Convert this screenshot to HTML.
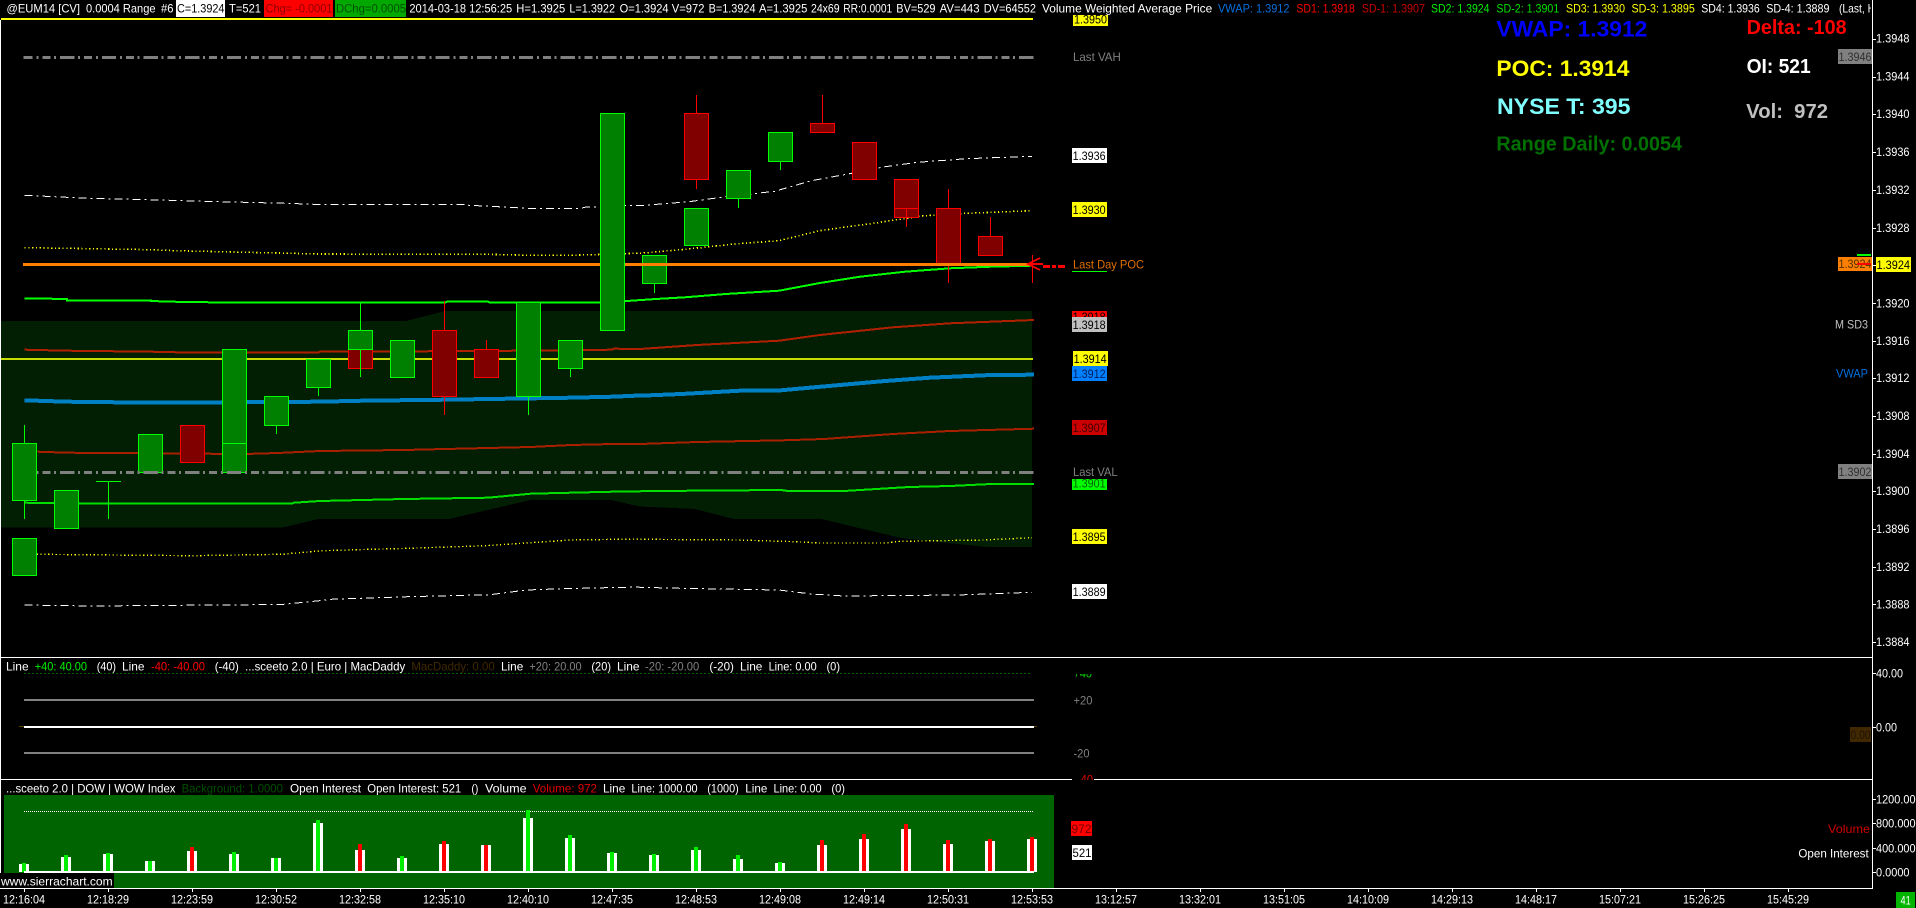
<!DOCTYPE html>
<html lang="en"><head><meta charset="utf-8"><title>Sierra Chart @EUM14</title>
<style>
html,body{margin:0;padding:0;background:#000;width:1916px;height:908px;overflow:hidden}
svg{display:block}
text{font-family:"Liberation Sans",Arial,sans-serif;font-size:12px;fill:#fff}
.b{font-weight:bold}
.k{fill:#000}
</style></head><body>
<svg xmlns="http://www.w3.org/2000/svg" width="1916" height="908" viewBox="0 0 1916 908">
<defs>
<clipPath id="cHead"><rect x="0" y="0" width="1871" height="18"/></clipPath>
<clipPath id="c40"><rect x="1070" y="674" width="30" height="8"/></clipPath>
<clipPath id="cm40"><rect x="1070" y="774" width="30" height="6"/></clipPath>
<clipPath id="c3901"><rect x="1072" y="479" width="35" height="11"/></clipPath>
<clipPath id="c3918"><rect x="1072" y="311" width="35" height="6"/></clipPath>
<clipPath id="c3950"><rect x="1073" y="15" width="35" height="11"/></clipPath>
</defs>
<rect width="1916" height="908" fill="#000"/>

<!-- shaded band -->
<polygon fill="#021f03" shape-rendering="crispEdges" points="0,321 406,321 445,311 1032,311 1032,547 987,547 901,538 821.6,519 734,519 695,509 640,506.5 611,500 530.6,500 449,519 318.4,519 281.6,527.7 0,527.7"/>

<!-- study lines -->
<g fill="none" shape-rendering="crispEdges">
<polyline stroke="#fff" stroke-width="1" stroke-dasharray="8 4 2 4" points="24.5,195.3 67,197.3 90,198.3 131,199.3 171,200.3 204,201.3 245,202.3 286,203.3 314,204.3 465,204.3 469,205.3 510,207.3 526,208.3 582,208.3 584,207.3 625,205.7 640,205.7 689,201.7 725.7,196.7 774.7,191.3 811.4,180.7 848,174 885,166.7 917.6,162.3 966.5,158.7 1032,156.3"/>
<polyline stroke="#fff" stroke-width="1" stroke-dasharray="8 4 2 4" points="24.5,605 90,606 281.6,604.5 326.5,600 330.6,599.3 408,596.7 490,594.7 526.5,590 563,588.7 636.7,587 640,587.3 680.8,588.3 778.8,590 811.4,594 844,596 958,595 1032,592.3"/>
<polyline stroke="#ffff00" stroke-width="1.6" stroke-dasharray="1.2 2.6" points="24.5,247.7 67,248.3 108,249 151,249.7 175.5,250.7 232.6,252 277.6,253 318,254 485.7,254.3 530.6,255.3 571,255.3 636.7,253.3 640,253.3 685,249.3 738,243.7 778.8,240.7 819.6,230.7 868.6,224 921.6,216 966.5,213.3 1032,210.7"/>
<polyline stroke="#ffff00" stroke-width="1.4" stroke-dasharray="1.2 2.6" points="36.7,554.3 192,555.7 281.6,554.3 322.4,550.7 408,548.3 485.7,545.7 530.6,542.7 571.4,540 636.7,539 640,539.3 738,540 795,541.7 819.6,543 885,543 901,541.3 983,540 1032,537.7"/>
<polyline stroke="#00ff00" stroke-width="2" points="24.5,298.3 67,299 67,300.3 151,300.3 151,301 172,301.7 237,302.7 445,302.7 447,301.7 488,301.7 490,302.7 600,302.7 612,302 656,299 685,297.3 725.7,294 779,290.7 820,283 860,276.7 905,271.7 950,268.3 991,266.7 1032,265.7"/>
<polyline stroke="#b02000" stroke-width="2" points="24.5,349.7 67,350.7 151,351.7 194,352.7 318,352.7 320,351.7 488,351 612,349.7 614,348.7 640,349 697,345 779,340.7 820,335 893,327.3 950,323.3 1034,320"/>
<rect x="1" y="358" width="1032" height="2" fill="#c8dc00"/>
<polyline stroke="#0080c4" stroke-width="4" points="24.5,400.3 67,401.7 151,402.7 320,401.7 363,400.7 446,399.7 571,397.7 613,396.7 635,395.7 640,395.7 681,394 740,390.7 781,390.3 832,385.7 885,381 930,377.7 991,375 1034,374.7"/>
<polyline stroke="#a82000" stroke-width="2" points="37.5,451.7 67,452.7 245,454 277.6,453 320,451 404,450 445,449 530.6,447 571,445 613,444 640,444 697,442 783,440.3 824,439 893,434 950,431 1034,428.7"/>
<polyline stroke="#00e000" stroke-width="2" points="24.5,502.7 81,503.7 292,503.7 294,502.7 320,501 404,499 488,497.7 530.6,493.7 571,492.7 613,491.7 656,491 781,490 788,491 844,491 909,487 950,486 991,484 1034,484"/>
</g>

<!-- candles -->
<g shape-rendering="crispEdges">
<g stroke="#00ff00" stroke-width="1" fill="none">
<path d="M24.5 425V519M108.5 481V519M96 481.5H121M276.5 425V434M318.5 387V396M360.5 303V377M528.5 396V415M570.5 368V377M654.5 283V293M738.5 198V208M780.5 161V170"/>
</g>
<g stroke="#ff0000" stroke-width="1" fill="none">
<path d="M444.5 301V415M486.5 340V349M696.5 95V189M822.5 95V123M906.5 217V227M948.5 189V283M990.5 217V236"/>
</g>
<g fill="#800000" stroke="#ff0000" stroke-width="1">
<rect x="348.5" y="349.5" width="24" height="19"/>
<rect x="180.5" y="425.5" width="24" height="37"/>
<rect x="432.5" y="330.5" width="24" height="66"/>
<rect x="474.5" y="349.5" width="24" height="28"/>
<rect x="684.5" y="113.5" width="24" height="66"/>
<rect x="810.5" y="123.5" width="24" height="9"/>
<rect x="852.5" y="142.5" width="24" height="37"/>
<rect x="894.5" y="179.5" width="24" height="38"/>
<rect x="936.5" y="208.5" width="24" height="56"/>
<rect x="978.5" y="236.5" width="24" height="19"/>
</g>
<path d="M894.5 208.5H918.5M906.5 208V217" stroke="#ff0000" stroke-width="1" fill="none"/>
<path d="M360.5 349V377" stroke="#00ff00" stroke-width="1" fill="none"/>
<g fill="#008000" stroke="#00ff00" stroke-width="1">
<rect x="12.5" y="443.5" width="24" height="57"/>
<rect x="12.5" y="538.5" width="24" height="37"/>
<rect x="54.5" y="490.5" width="24" height="38"/>
<rect x="138.5" y="434.5" width="24" height="38"/>
<rect x="222.5" y="349.5" width="24" height="94"/>
<rect x="222.5" y="443.5" width="24" height="29"/>
<rect x="264.5" y="396.5" width="24" height="29"/>
<rect x="306.5" y="359.5" width="24" height="28"/>
<rect x="348.5" y="330.5" width="24" height="19"/>
<rect x="390.5" y="340.5" width="24" height="37"/>
<rect x="516.5" y="302.5" width="24" height="94"/>
<rect x="558.5" y="340.5" width="24" height="28"/>
<rect x="642.5" y="255.5" width="24" height="28"/>
<rect x="684.5" y="208.5" width="24" height="37"/>
<rect x="726.5" y="170.5" width="24" height="28"/>
<rect x="768.5" y="132.5" width="24" height="29"/>
</g>
<!-- orange last day POC -->
<rect x="23" y="263" width="1007" height="3" fill="#ff8000"/>
<rect x="600.5" y="113.5" width="24" height="217" fill="#008000" stroke="#00ff00" stroke-width="1"/>
</g>

<!-- value area lines -->
<g fill="none" stroke="#808080" stroke-width="3" shape-rendering="crispEdges">
<line x1="23.5" y1="57.5" x2="1034.5" y2="57.5" stroke-dasharray="14.3 3.7 2 4 8 3.7 2 4" stroke-dashoffset="5.1"/>
<line x1="37" y1="472.5" x2="1034.5" y2="472.5" stroke-dasharray="14.3 3.7 2 4 8 3.7 2 4" stroke-dashoffset="18.6"/>
</g>

<!-- yellow top line -->
<rect x="1" y="18" width="1032" height="2" fill="#ffff00"/>

<!-- arrow -->
<g fill="none" stroke="#ff0000" shape-rendering="crispEdges">
<path d="M1032.5 255V283" stroke-width="1"/>
<path d="M1040 258L1028 264L1040 270M1028 264H1043" stroke-width="2"/>
<path d="M1043 266.5H1050M1052 266.5H1056M1058 266.5H1065" stroke-width="3"/>
</g>

<!-- panes & axis -->
<g fill="#fff" shape-rendering="crispEdges">
<rect x="0" y="20" width="1" height="868"/>
<rect x="1872" y="0" width="1" height="889"/>
<rect x="0" y="657" width="1872" height="1"/>
<rect x="0" y="779" width="1072" height="1"/>
<rect x="1094" y="779" width="778" height="1"/>
<rect x="0" y="888" width="1872" height="1"/>
<path d="M1873 39h3v1h-3zM1873 77h3v1h-3zM1873 114h3v1h-3zM1873 152h3v1h-3zM1873 190h3v1h-3zM1873 228h3v1h-3zM1873 265h3v1h-3zM1873 303h3v1h-3zM1873 341h3v1h-3zM1873 378h3v1h-3zM1873 416h3v1h-3zM1873 454h3v1h-3zM1873 491h3v1h-3zM1873 529h3v1h-3zM1873 567h3v1h-3zM1873 604h3v1h-3zM1873 642h3v1h-3zM1873 673h3v1h-3zM1873 727h3v1h-3zM1873 799h3v1h-3zM1873 823h3v1h-3zM1873 848h3v1h-3zM1873 872h3v1h-3z"/>
<path d="M24 889h1v3h-1zM108 889h1v3h-1zM192 889h1v3h-1zM276 889h1v3h-1zM360 889h1v3h-1zM444 889h1v3h-1zM528 889h1v3h-1zM612 889h1v3h-1zM696 889h1v3h-1zM780 889h1v3h-1zM864 889h1v3h-1zM948 889h1v3h-1zM1032 889h1v3h-1zM1116 889h1v3h-1zM1200 889h1v3h-1zM1284 889h1v3h-1zM1368 889h1v3h-1zM1452 889h1v3h-1zM1536 889h1v3h-1zM1620 889h1v3h-1zM1704 889h1v3h-1zM1788 889h1v3h-1z"/>
</g>

<!-- middle pane lines -->
<g shape-rendering="crispEdges">
<line x1="24.5" y1="673.5" x2="1032" y2="673.5" stroke="#00c000" stroke-width="1" stroke-dasharray="1 3"/>
<rect x="24" y="699" width="1010" height="2" fill="#808080"/>
<rect x="24" y="726" width="1010" height="2" fill="#fff"/>
<rect x="19" y="726" width="5" height="1" fill="#604000"/>
<rect x="1034" y="726" width="3" height="1" fill="#604000"/>
<rect x="24" y="752" width="1010" height="2" fill="#808080"/>
</g>

<!-- volume pane -->
<g shape-rendering="crispEdges">
<rect x="4" y="795" width="1050" height="93" fill="#006400"/>
<line x1="24" y1="811.5" x2="1033" y2="811.5" stroke="#fff" stroke-width="1" stroke-dasharray="1 1"/>
<g fill="#fff">
<rect x="19" y="864" width="10" height="8"/><rect x="61" y="857" width="10" height="15"/><rect x="103" y="854" width="10" height="18"/><rect x="145" y="861" width="10" height="11"/><rect x="187" y="851" width="10" height="21"/><rect x="229" y="854" width="10" height="18"/><rect x="271" y="858" width="10" height="14"/><rect x="313" y="823" width="10" height="49"/><rect x="355" y="850" width="10" height="22"/><rect x="397" y="858" width="10" height="14"/><rect x="439" y="844" width="10" height="28"/><rect x="481" y="845" width="10" height="27"/><rect x="523" y="818" width="10" height="54"/><rect x="565" y="838" width="10" height="34"/><rect x="607" y="853" width="10" height="19"/><rect x="649" y="855" width="10" height="17"/><rect x="691" y="850" width="10" height="22"/><rect x="733" y="859" width="10" height="13"/><rect x="775" y="863" width="10" height="9"/><rect x="817" y="845" width="10" height="27"/><rect x="859" y="839" width="10" height="33"/><rect x="901" y="829" width="10" height="43"/><rect x="943" y="844" width="10" height="28"/><rect x="985" y="841" width="10" height="31"/><rect x="1027" y="839" width="10" height="33"/>
</g>
<g fill="#00ee00">
<rect x="22" y="863" width="4" height="9"/><rect x="64" y="855" width="4" height="17"/><rect x="106" y="853" width="4" height="19"/><rect x="148" y="861" width="4" height="11"/><rect x="232" y="852" width="4" height="20"/><rect x="274" y="858" width="4" height="14"/><rect x="316" y="820" width="4" height="52"/><rect x="400" y="856" width="4" height="16"/><rect x="526" y="810" width="4" height="62"/><rect x="568" y="835" width="4" height="37"/><rect x="610" y="852" width="4" height="20"/><rect x="652" y="854" width="4" height="18"/><rect x="694" y="847" width="4" height="25"/><rect x="736" y="855" width="4" height="17"/><rect x="778" y="862" width="4" height="10"/>
</g>
<g fill="#ff0000">
<rect x="190" y="847" width="4" height="25"/><rect x="358" y="844" width="4" height="28"/><rect x="442" y="841" width="4" height="31"/><rect x="484" y="845" width="4" height="27"/><rect x="820" y="840" width="4" height="32"/><rect x="862" y="834" width="4" height="38"/><rect x="904" y="824" width="4" height="48"/><rect x="946" y="840" width="4" height="32"/><rect x="988" y="839" width="4" height="33"/><rect x="1030" y="837" width="4" height="35"/>
</g>
<rect x="24" y="871" width="1010" height="2" fill="#fff"/>
<rect x="0" y="873" width="114" height="15" fill="#000"/>
</g>
<text x="1" y="885.6" textLength="111.6" lengthAdjust="spacingAndGlyphs">www.sierrachart.com</text>

<!-- header row -->
<g shape-rendering="crispEdges">
<rect x="176" y="0" width="49" height="17" fill="#fff"/>
<rect x="264" y="0" width="69" height="17" fill="#ff0000"/>
<rect x="335" y="0" width="71" height="17" fill="#00a800"/>
</g>
<g clip-path="url(#cHead)">
<text x="6.5" y="12.5" textLength="73.5" lengthAdjust="spacingAndGlyphs">@EUM14 [CV]</text>
<text x="86" y="12.5" textLength="69.5" lengthAdjust="spacingAndGlyphs">0.0004 Range</text>
<text x="161" y="12.5" textLength="12.5" lengthAdjust="spacingAndGlyphs">#6</text>
<text x="177" y="12.5" textLength="47.5" lengthAdjust="spacingAndGlyphs" class="k">C=1.3924</text>
<text x="229" y="12.5" textLength="32" lengthAdjust="spacingAndGlyphs">T=521</text>
<text x="265.5" y="12.5" textLength="67" lengthAdjust="spacingAndGlyphs" style="fill:#8c0000">Chg= -0.0001</text>
<text x="336" y="12.5" textLength="70" lengthAdjust="spacingAndGlyphs" style="fill:#005000">DChg=0.0005</text>
<text x="409.4" y="12.5" textLength="102.8" lengthAdjust="spacingAndGlyphs">2014-03-18 12:56:25</text>
<text x="516.3" y="12.5" textLength="49" lengthAdjust="spacingAndGlyphs">H=1.3925</text>
<text x="569.4" y="12.5" textLength="45.6" lengthAdjust="spacingAndGlyphs">L=1.3922</text>
<text x="619.6" y="12.5" textLength="49" lengthAdjust="spacingAndGlyphs">O=1.3924</text>
<text x="671.8" y="12.5" textLength="32.7" lengthAdjust="spacingAndGlyphs">V=972</text>
<text x="708.6" y="12.5" textLength="46.9" lengthAdjust="spacingAndGlyphs">B=1.3924</text>
<text x="759" y="12.5" textLength="48.3" lengthAdjust="spacingAndGlyphs">A=1.3925</text>
<text x="811" y="12.5" textLength="28.6" lengthAdjust="spacingAndGlyphs">24x69</text>
<text x="843.3" y="12.5" textLength="48.9" lengthAdjust="spacingAndGlyphs">RR:0.0001</text>
<text x="896.3" y="12.5" textLength="39.2" lengthAdjust="spacingAndGlyphs">BV=529</text>
<text x="939.6" y="12.5" textLength="40" lengthAdjust="spacingAndGlyphs">AV=443</text>
<text x="983.7" y="12.5" textLength="52.3" lengthAdjust="spacingAndGlyphs">DV=64552</text>
<text x="1042" y="12.5" textLength="170.2" lengthAdjust="spacingAndGlyphs">Volume Weighted Average Price</text>
<text x="1218" y="12.5" textLength="71.5" lengthAdjust="spacingAndGlyphs" style="fill:#0a6fe0">VWAP: 1.3912</text>
<text x="1296.4" y="12.5" textLength="58.4" lengthAdjust="spacingAndGlyphs" style="fill:#ff0000">SD1: 1.3918</text>
<text x="1361.7" y="12.5" textLength="63.3" lengthAdjust="spacingAndGlyphs" style="fill:#c80000">SD-1: 1.3907</text>
<text x="1431" y="12.5" textLength="58.5" lengthAdjust="spacingAndGlyphs" style="fill:#00f000">SD2: 1.3924</text>
<text x="1496.4" y="12.5" textLength="62.9" lengthAdjust="spacingAndGlyphs" style="fill:#00e000">SD-2: 1.3901</text>
<text x="1566" y="12.5" textLength="59" lengthAdjust="spacingAndGlyphs" style="fill:#ffff00">SD3: 1.3930</text>
<text x="1631.5" y="12.5" textLength="63.3" lengthAdjust="spacingAndGlyphs" style="fill:#ffff00">SD-3: 1.3895</text>
<text x="1701.3" y="12.5" textLength="58.4" lengthAdjust="spacingAndGlyphs">SD4: 1.3936</text>
<text x="1766.2" y="12.5" textLength="63.3" lengthAdjust="spacingAndGlyphs">SD-4: 1.3889</text>
<text x="1839" y="12.5" textLength="36" lengthAdjust="spacingAndGlyphs">(Last, H</text>
</g>

<!-- big readouts -->
<text x="1496.4" y="36.4" class="b" textLength="151" lengthAdjust="spacingAndGlyphs" style="font-size:22.6px;fill:#0000ff">VWAP: 1.3912</text>
<text x="1496.4" y="75.8" class="b" textLength="133" lengthAdjust="spacingAndGlyphs" style="font-size:22.6px;fill:#ffff00">POC: 1.3914</text>
<text x="1497" y="114.1" class="b" textLength="133.5" lengthAdjust="spacingAndGlyphs" style="font-size:22.6px;fill:#80ffff">NYSE T: 395</text>
<text x="1496.4" y="150.5" class="b" textLength="185.6" lengthAdjust="spacingAndGlyphs" style="font-size:20px;fill:#007000">Range Daily: 0.0054</text>
<text x="1746.6" y="33.9" class="b" textLength="100" lengthAdjust="spacingAndGlyphs" style="font-size:20px;fill:#ff0000">Delta: -108</text>
<text x="1746.6" y="72.9" class="b" textLength="64.1" lengthAdjust="spacingAndGlyphs" style="font-size:20px;fill:#fff">OI: 521</text>
<text x="1746.2" y="117.9" class="b" textLength="81.8" lengthAdjust="spacingAndGlyphs" style="font-size:20px;fill:#c0c0c0;white-space:pre" xml:space="preserve">Vol:  972</text>

<!-- price labels -->
<g shape-rendering="crispEdges">
<rect x="1073" y="15" width="35" height="11" fill="#ffff00"/>
<rect x="1072" y="148" width="35" height="15" fill="#fff"/>
<rect x="1072" y="202" width="35" height="15" fill="#ffff00"/>
<rect x="1072" y="271" width="35" height="1" fill="#00ff00"/>
<rect x="1072" y="311" width="35" height="6" fill="#ff0000"/>
<rect x="1072" y="317" width="35" height="15" fill="#c0c0c0"/>
<rect x="1073" y="351" width="35" height="15" fill="#ffff00"/>
<rect x="1072" y="366" width="35" height="15" fill="#0080ff"/>
<rect x="1072" y="420" width="35" height="15" fill="#cc0000"/>
<rect x="1072" y="479" width="35" height="11" fill="#00ff00"/>
<rect x="1072" y="529" width="35" height="15" fill="#ffff00"/>
<rect x="1072" y="584" width="35" height="15" fill="#fff"/>
<rect x="1838" y="49" width="34" height="15" fill="#808080"/>
<rect x="1838" y="257" width="34" height="14" fill="#ff8000"/>
<rect x="1838" y="464" width="34" height="15" fill="#808080"/>
<rect x="1876" y="257" width="35" height="15" fill="#ffff00"/>
<rect x="1850" y="727" width="21" height="15" fill="#402800"/>
<rect x="1071" y="821" width="21" height="15" fill="#ff0000"/>
<rect x="1072" y="845" width="20" height="15" fill="#fff"/>
</g>
<g clip-path="url(#c3950)"><text x="1074" y="23.5" textLength="33" lengthAdjust="spacingAndGlyphs" class="k">1.3950</text></g>
<text x="1073" y="61" textLength="47.8" lengthAdjust="spacingAndGlyphs" style="fill:#808080">Last VAH</text>
<text x="1072.6" y="160" textLength="33" lengthAdjust="spacingAndGlyphs" class="k">1.3936</text>
<text x="1072.6" y="214" textLength="33" lengthAdjust="spacingAndGlyphs" class="k">1.3930</text>
<text x="1073" y="268.3" textLength="71" lengthAdjust="spacingAndGlyphs" style="fill:#e07000">Last Day POC</text>
<g clip-path="url(#c3918)"><text x="1072.6" y="321" textLength="33" lengthAdjust="spacingAndGlyphs" class="k">1.3918</text></g>
<text x="1072.6" y="329" textLength="33" lengthAdjust="spacingAndGlyphs" class="k">1.3918</text>
<text x="1073.6" y="363" textLength="33" lengthAdjust="spacingAndGlyphs" class="k">1.3914</text>
<text x="1072.6" y="378" textLength="33" lengthAdjust="spacingAndGlyphs" style="fill:#002060">1.3912</text>
<text x="1072.6" y="432" textLength="33" lengthAdjust="spacingAndGlyphs" style="fill:#400000">1.3907</text>
<text x="1073" y="476" textLength="44.6" lengthAdjust="spacingAndGlyphs" style="fill:#808080">Last VAL</text>
<g clip-path="url(#c3901)"><text x="1072.6" y="487.3" textLength="33" lengthAdjust="spacingAndGlyphs" style="fill:#006000">1.3901</text></g>
<text x="1072.6" y="541" textLength="33" lengthAdjust="spacingAndGlyphs" class="k">1.3895</text>
<text x="1072.6" y="596" textLength="33" lengthAdjust="spacingAndGlyphs" class="k">1.3889</text>
<text x="1838.5" y="61" textLength="33" lengthAdjust="spacingAndGlyphs" style="fill:#303030">1.3946</text>
<text x="1838.5" y="268" textLength="33" lengthAdjust="spacingAndGlyphs" style="fill:#503000">1.3924</text>
<rect x="1857" y="254" width="14" height="2" fill="#00ff00" shape-rendering="crispEdges"/>
<rect x="1857" y="263" width="14" height="2" fill="#ff0000" shape-rendering="crispEdges"/>
<text x="1835" y="328.6" textLength="33" lengthAdjust="spacingAndGlyphs" style="fill:#c0c0c0">M SD3</text>
<text x="1836" y="377.6" textLength="32" lengthAdjust="spacingAndGlyphs" style="fill:#0070e0">VWAP</text>
<text x="1838.5" y="476" textLength="33" lengthAdjust="spacingAndGlyphs" style="fill:#303030">1.3902</text>
<text x="1850.5" y="739" textLength="20" lengthAdjust="spacingAndGlyphs" style="fill:#201400">0.00</text>

<!-- right axis -->
<text x="1876" y="42.6" textLength="33.5" lengthAdjust="spacingAndGlyphs">1.3948</text>
<text x="1876" y="80.6" textLength="33.5" lengthAdjust="spacingAndGlyphs">1.3944</text>
<text x="1876" y="117.8" textLength="33.5" lengthAdjust="spacingAndGlyphs">1.3940</text>
<text x="1876" y="155.8" textLength="33.5" lengthAdjust="spacingAndGlyphs">1.3936</text>
<text x="1876" y="193.8" textLength="33.5" lengthAdjust="spacingAndGlyphs">1.3932</text>
<text x="1876" y="231.8" textLength="33.5" lengthAdjust="spacingAndGlyphs">1.3928</text>
<text x="1876.5" y="269" textLength="33.5" lengthAdjust="spacingAndGlyphs" class="k">1.3924</text>
<text x="1876" y="307.3" textLength="33.5" lengthAdjust="spacingAndGlyphs">1.3920</text>
<text x="1876" y="345" textLength="33.5" lengthAdjust="spacingAndGlyphs">1.3916</text>
<text x="1876" y="382" textLength="33.5" lengthAdjust="spacingAndGlyphs">1.3912</text>
<text x="1876" y="420" textLength="33.5" lengthAdjust="spacingAndGlyphs">1.3908</text>
<text x="1876" y="458" textLength="33.5" lengthAdjust="spacingAndGlyphs">1.3904</text>
<text x="1876" y="495" textLength="33.5" lengthAdjust="spacingAndGlyphs">1.3900</text>
<text x="1876" y="533" textLength="33.5" lengthAdjust="spacingAndGlyphs">1.3896</text>
<text x="1876" y="571" textLength="33.5" lengthAdjust="spacingAndGlyphs">1.3892</text>
<text x="1876" y="608.3" textLength="33.5" lengthAdjust="spacingAndGlyphs">1.3888</text>
<text x="1876" y="646" textLength="33.5" lengthAdjust="spacingAndGlyphs">1.3884</text>
<text x="1876" y="677.6" textLength="27" lengthAdjust="spacingAndGlyphs">40.00</text>
<text x="1876" y="731.6" textLength="21" lengthAdjust="spacingAndGlyphs">0.00</text>
<text x="1876" y="803.6" textLength="39.6" lengthAdjust="spacingAndGlyphs">1200.00</text>
<text x="1876" y="827.6" textLength="39.6" lengthAdjust="spacingAndGlyphs">800.000</text>
<text x="1876" y="852.6" textLength="39.6" lengthAdjust="spacingAndGlyphs">400.000</text>
<text x="1876" y="876.6" textLength="33.5" lengthAdjust="spacingAndGlyphs">0.0000</text>

<!-- middle pane header -->
<text x="6" y="670.3" textLength="22.6" lengthAdjust="spacingAndGlyphs">Line</text>
<text x="34.7" y="670.3" textLength="52.3" lengthAdjust="spacingAndGlyphs" style="fill:#00f000">+40: 40.00</text>
<text x="96.7" y="670.3" textLength="19.3" lengthAdjust="spacingAndGlyphs">(40)</text>
<text x="122" y="670.3" textLength="22.5" lengthAdjust="spacingAndGlyphs">Line</text>
<text x="151" y="670.3" textLength="54" lengthAdjust="spacingAndGlyphs" style="fill:#ff0000">-40: -40.00</text>
<text x="214.7" y="670.3" textLength="24.1" lengthAdjust="spacingAndGlyphs">(-40)</text>
<text x="245" y="670.3" textLength="160.3" lengthAdjust="spacingAndGlyphs">...sceeto 2.0 | Euro | MacDaddy</text>
<text x="411.4" y="670.3" textLength="83.3" lengthAdjust="spacingAndGlyphs" style="fill:#402800">MacDaddy: 0.00</text>
<text x="501" y="670.3" textLength="22.3" lengthAdjust="spacingAndGlyphs">Line</text>
<text x="529.4" y="670.3" textLength="52.2" lengthAdjust="spacingAndGlyphs" style="fill:#808080">+20: 20.00</text>
<text x="591.4" y="670.3" textLength="19.6" lengthAdjust="spacingAndGlyphs">(20)</text>
<text x="617" y="670.3" textLength="22.5" lengthAdjust="spacingAndGlyphs">Line</text>
<text x="645" y="670.3" textLength="54.2" lengthAdjust="spacingAndGlyphs" style="fill:#808080">-20: -20.00</text>
<text x="709.4" y="670.3" textLength="24.5" lengthAdjust="spacingAndGlyphs">(-20)</text>
<text x="740" y="670.3" textLength="22.4" lengthAdjust="spacingAndGlyphs">Line</text>
<text x="768.6" y="670.3" textLength="48.1" lengthAdjust="spacingAndGlyphs">Line: 0.00</text>
<text x="826.5" y="670.3" textLength="13.5" lengthAdjust="spacingAndGlyphs">(0)</text>

<g clip-path="url(#c40)"><text x="1073.5" y="677.5" textLength="18.5" lengthAdjust="spacingAndGlyphs" style="fill:#00e000">+40</text></g>
<text x="1073.5" y="704.3" textLength="19" lengthAdjust="spacingAndGlyphs" style="fill:#808080">+20</text>
<text x="1073.5" y="757.3" textLength="16" lengthAdjust="spacingAndGlyphs" style="fill:#808080">-20</text>
<g clip-path="url(#cm40)"><text x="1077" y="783.6" textLength="16" lengthAdjust="spacingAndGlyphs" style="fill:#e00000">-40</text></g>

<!-- bottom pane header -->
<text x="6" y="792.3" textLength="169.5" lengthAdjust="spacingAndGlyphs">...sceeto 2.0 | DOW | WOW Index</text>
<text x="181.6" y="792.3" textLength="101.3" lengthAdjust="spacingAndGlyphs" style="fill:#005000">Background: 1.0000</text>
<text x="290" y="792.3" textLength="71" lengthAdjust="spacingAndGlyphs">Open Interest</text>
<text x="367.3" y="792.3" textLength="93.9" lengthAdjust="spacingAndGlyphs">Open Interest: 521</text>
<text x="471.4" y="792.3" textLength="7" lengthAdjust="spacingAndGlyphs">()</text>
<text x="485" y="792.3" textLength="41.5" lengthAdjust="spacingAndGlyphs">Volume</text>
<text x="532.7" y="792.3" textLength="64.3" lengthAdjust="spacingAndGlyphs" style="fill:#e00000">Volume: 972</text>
<text x="603" y="792.3" textLength="22.3" lengthAdjust="spacingAndGlyphs">Line</text>
<text x="631.4" y="792.3" textLength="66.2" lengthAdjust="spacingAndGlyphs">Line: 1000.00</text>
<text x="707.3" y="792.3" textLength="31.5" lengthAdjust="spacingAndGlyphs">(1000)</text>
<text x="745.3" y="792.3" textLength="22" lengthAdjust="spacingAndGlyphs">Line</text>
<text x="773.5" y="792.3" textLength="48.1" lengthAdjust="spacingAndGlyphs">Line: 0.00</text>
<text x="831.4" y="792.3" textLength="13.6" lengthAdjust="spacingAndGlyphs">(0)</text>

<text x="1071.5" y="833" textLength="20" lengthAdjust="spacingAndGlyphs" style="fill:#700000">972</text>
<text x="1072.5" y="857" textLength="19" lengthAdjust="spacingAndGlyphs" class="k">521</text>
<text x="1828" y="833" textLength="42" lengthAdjust="spacingAndGlyphs" style="fill:#d00000">Volume</text>
<text x="1798.4" y="857.3" textLength="70.3" lengthAdjust="spacingAndGlyphs">Open Interest</text>

<!-- time axis -->
<text x="3" y="903.6" textLength="42" lengthAdjust="spacingAndGlyphs">12:16:04</text>
<text x="87" y="903.6" textLength="42" lengthAdjust="spacingAndGlyphs">12:18:29</text>
<text x="171" y="903.6" textLength="42" lengthAdjust="spacingAndGlyphs">12:23:59</text>
<text x="255" y="903.6" textLength="42" lengthAdjust="spacingAndGlyphs">12:30:52</text>
<text x="339" y="903.6" textLength="42" lengthAdjust="spacingAndGlyphs">12:32:58</text>
<text x="423" y="903.6" textLength="42" lengthAdjust="spacingAndGlyphs">12:35:10</text>
<text x="507" y="903.6" textLength="42" lengthAdjust="spacingAndGlyphs">12:40:10</text>
<text x="591" y="903.6" textLength="42" lengthAdjust="spacingAndGlyphs">12:47:35</text>
<text x="675" y="903.6" textLength="42" lengthAdjust="spacingAndGlyphs">12:48:53</text>
<text x="759" y="903.6" textLength="42" lengthAdjust="spacingAndGlyphs">12:49:08</text>
<text x="843" y="903.6" textLength="42" lengthAdjust="spacingAndGlyphs">12:49:14</text>
<text x="927" y="903.6" textLength="42" lengthAdjust="spacingAndGlyphs">12:50:31</text>
<text x="1011" y="903.6" textLength="42" lengthAdjust="spacingAndGlyphs">12:53:53</text>
<text x="1095" y="903.6" textLength="42" lengthAdjust="spacingAndGlyphs">13:12:57</text>
<text x="1179" y="903.6" textLength="42" lengthAdjust="spacingAndGlyphs">13:32:01</text>
<text x="1263" y="903.6" textLength="42" lengthAdjust="spacingAndGlyphs">13:51:05</text>
<text x="1347" y="903.6" textLength="42" lengthAdjust="spacingAndGlyphs">14:10:09</text>
<text x="1431" y="903.6" textLength="42" lengthAdjust="spacingAndGlyphs">14:29:13</text>
<text x="1515" y="903.6" textLength="42" lengthAdjust="spacingAndGlyphs">14:48:17</text>
<text x="1599" y="903.6" textLength="42" lengthAdjust="spacingAndGlyphs">15:07:21</text>
<text x="1683" y="903.6" textLength="42" lengthAdjust="spacingAndGlyphs">15:26:25</text>
<text x="1767" y="903.6" textLength="42" lengthAdjust="spacingAndGlyphs">15:45:29</text>

<rect x="1896" y="892" width="19" height="16" fill="#00b400" shape-rendering="crispEdges"/>
<text x="1900.5" y="904.3" textLength="10.2" lengthAdjust="spacingAndGlyphs">41</text>
</svg>
</body></html>
